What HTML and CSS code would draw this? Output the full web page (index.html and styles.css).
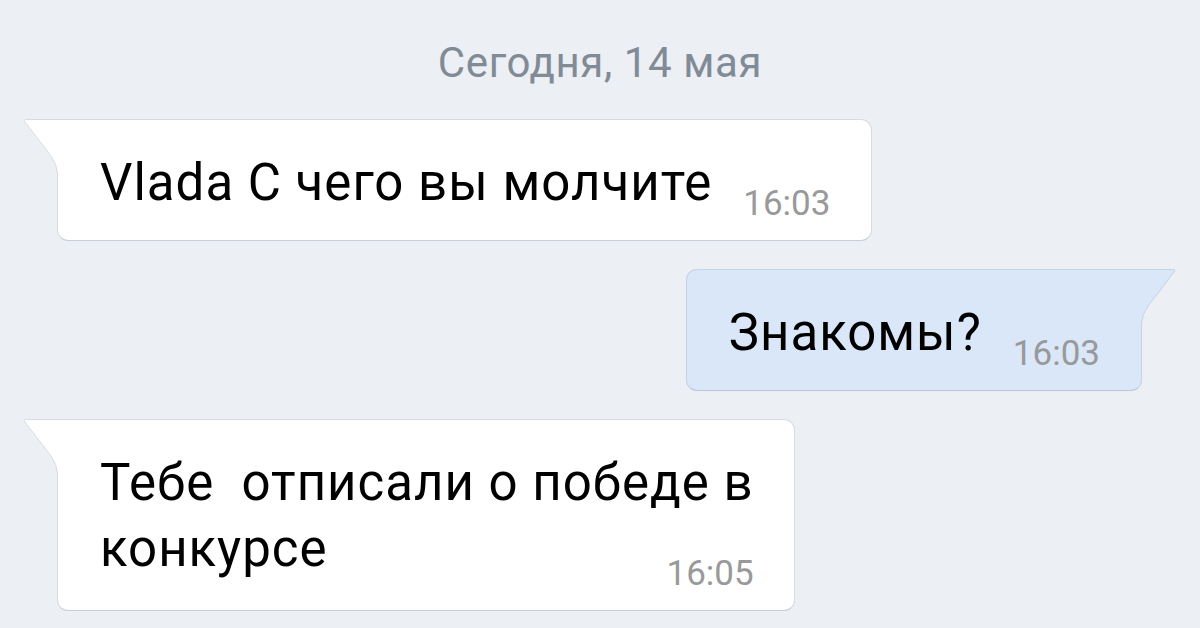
FILE: index.html
```html
<!DOCTYPE html>
<html lang="ru">
<head>
  <meta charset="UTF-8" />
  <title>Сообщения</title>
  <link rel="stylesheet" href="styles.css">
</head>
<body>
  <div class="chat">
    <div class="date">Сегодня, 14 мая</div>

    <div class="row">
      <div class="bubble">
        <svg class="tail" width="36" height="56" viewBox="0 0 36 56">
          <path class="tail-fill" d="M36.5 0 H4 Q0.5 0.5 2.5 3 L28.5 37 Q35 45.5 35.5 54 V56 H36.5 Z"/>
          <path class="tail-line" d="M36.5 0.5 H4 Q1 0.5 3 3 L29 37 Q35 45.5 35.5 54 V56"/>
        </svg>
        <div class="text">Vlada С чего вы молчите</div>
        <div class="time">16:03</div>
      </div>
    </div>

    <div class="row row-out">
      <div class="bubble bubble-out">
        <svg class="tail" width="36" height="56" viewBox="0 0 36 56">
          <path class="tail-fill" d="M36.5 0 H4 Q0.5 0.5 2.5 3 L28.5 37 Q35 45.5 35.5 54 V56 H36.5 Z"/>
          <path class="tail-line" d="M36.5 0.5 H4 Q1 0.5 3 3 L29 37 Q35 45.5 35.5 54 V56"/>
        </svg>
        <div class="text">Знакомы?</div>
        <div class="time">16:03</div>
      </div>
    </div>

    <div class="row">
      <div class="bubble bubble-long">
        <svg class="tail" width="36" height="56" viewBox="0 0 36 56">
          <path class="tail-fill" d="M36.5 0 H4 Q0.5 0.5 2.5 3 L28.5 37 Q35 45.5 35.5 54 V56 H36.5 Z"/>
          <path class="tail-line" d="M36.5 0.5 H4 Q1 0.5 3 3 L29 37 Q35 45.5 35.5 54 V56"/>
        </svg>
        <div class="text">Тебе&nbsp; отписали о победе в<br>конкурсе</div>
        <div class="time">16:05</div>
      </div>
    </div>
  </div>
</body>
</html>
```

FILE: styles.css
```css
body {
  margin: 0;
  background: #eceff3;
  font-family: Roboto, "Noto Sans", sans-serif;
  color: #000;
}
.chat {
  height: 628px;
  overflow: hidden;
  padding: 43px 58px 0 57px;
  box-sizing: border-box;
  display: flex;
  flex-direction: column;
  gap: 28px;
}
.date {
  text-align: center;
  font-size: 42px;
  line-height: 40px;
  letter-spacing: 0.6px;
  color: #818b96;
  margin-bottom: 8px;
  padding-left: 1px;
}
.row {
  display: flex;
}
.row-out {
  justify-content: flex-end;
}
.bubble {
  position: relative;
  display: flex;
  align-items: flex-end;
  background: #fff;
  border: 1px solid #d6dbe2;
  border-bottom-color: #c9cfd7;
  border-radius: 0 11px 11px 11px;
  padding: 30px 41px 19px 42px;
}
.bubble .tail {
  position: absolute;
  top: -1px;
  left: -36px;
}
.tail-fill {
  fill: #fff;
}
.tail-line {
  fill: none;
  stroke: #d6dbe2;
  stroke-width: 1;
}
.bubble-out {
  background: #d9e7f8;
  border-color: #c5d3e4;
  border-bottom-color: #b9c7d8;
  border-radius: 11px 0 11px 11px;
  padding-left: 42px;
  padding-right: 41px;
}
.bubble-out .tail {
  left: auto;
  right: -36px;
  transform: scaleX(-1);
}
.bubble-out .tail-fill {
  fill: #d9e7f8;
}
.bubble-out .tail-line {
  stroke: #c5d3e4;
}
.text {
  font-size: 51px;
  line-height: 66px;
  letter-spacing: 1px;
  margin-bottom: 5px;
  white-space: nowrap;
}
.time {
  font-size: 35px;
  line-height: 34px;
  color: #999;
  margin-left: 31px;
}
.bubble-long {
  flex-direction: column;
  align-items: stretch;
  padding-right: 40px;
}
.bubble-long .text {
  margin-bottom: 0;
}
.bubble-long .time {
  align-self: flex-end;
  margin-top: -25px;
}
```
